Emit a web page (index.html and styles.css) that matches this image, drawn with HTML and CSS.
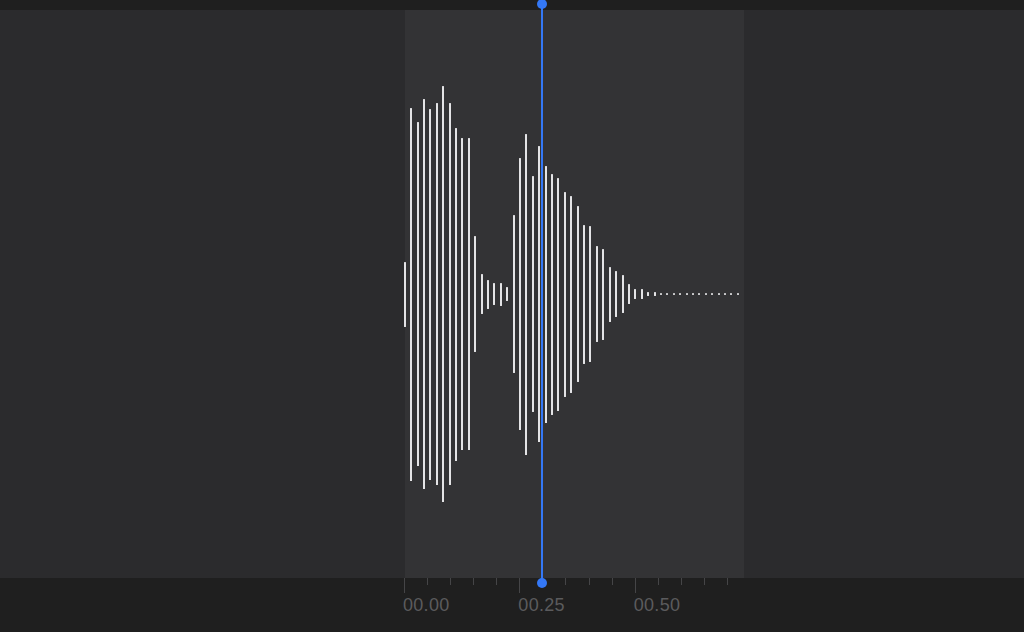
FILE: index.html
```html
<!DOCTYPE html>
<html lang="en">
<head>
<meta charset="utf-8">
<title>Waveform</title>
<link rel="stylesheet" href="styles.css">
</head>
<body>
<div class="app">
  <div class="topbar"></div>
  <div class="track">
    <div class="pad-left"></div>
    <div class="clip">
      <div class="wave">
        <div class="bar" style="height:65px"></div>
        <div class="bar" style="height:373px"></div>
        <div class="bar" style="height:344px"></div>
        <div class="bar" style="height:390px"></div>
        <div class="bar" style="height:371px"></div>
        <div class="bar" style="height:382px"></div>
        <div class="bar" style="height:416px"></div>
        <div class="bar" style="height:382px"></div>
        <div class="bar" style="height:333px"></div>
        <div class="bar" style="height:312px"></div>
        <div class="bar" style="height:312px"></div>
        <div class="bar" style="height:116px"></div>
        <div class="bar" style="height:40px"></div>
        <div class="bar" style="height:29px"></div>
        <div class="bar" style="height:22px"></div>
        <div class="bar" style="height:23px"></div>
        <div class="bar" style="height:14px"></div>
        <div class="bar" style="height:158px"></div>
        <div class="bar" style="height:272px"></div>
        <div class="bar" style="height:321px"></div>
        <div class="bar" style="height:236px"></div>
        <div class="bar" style="height:296px"></div>
        <div class="bar" style="height:257px"></div>
        <div class="bar" style="height:241px"></div>
        <div class="bar" style="height:233px"></div>
        <div class="bar" style="height:205px"></div>
        <div class="bar" style="height:197px"></div>
        <div class="bar" style="height:176px"></div>
        <div class="bar" style="height:139px"></div>
        <div class="bar" style="height:136px"></div>
        <div class="bar" style="height:96px"></div>
        <div class="bar" style="height:91px"></div>
        <div class="bar" style="height:55px"></div>
        <div class="bar" style="height:46px"></div>
        <div class="bar" style="height:38px"></div>
        <div class="bar" style="height:20px"></div>
        <div class="bar" style="height:10px"></div>
        <div class="bar" style="height:10px"></div>
        <div class="bar" style="height:4px"></div>
        <div class="bar" style="height:4px"></div>
        <div class="bar dot"></div>
        <div class="bar dot"></div>
        <div class="bar dot"></div>
        <div class="bar dot"></div>
        <div class="bar dot"></div>
        <div class="bar dot"></div>
        <div class="bar dot"></div>
        <div class="bar dot"></div>
        <div class="bar dot"></div>
        <div class="bar dot"></div>
        <div class="bar dot"></div>
        <div class="bar dot"></div>
        <div class="bar dot"></div>
      </div>
    </div>
    <div class="pad-right"></div>
  </div>
  <div class="ruler">
    <div class="ticks">
      <div class="tick major"></div>
      <div class="tick"></div>
      <div class="tick"></div>
      <div class="tick"></div>
      <div class="tick"></div>
      <div class="tick major"></div>
      <div class="tick"></div>
      <div class="tick"></div>
      <div class="tick"></div>
      <div class="tick"></div>
      <div class="tick major"></div>
      <div class="tick"></div>
      <div class="tick"></div>
      <div class="tick"></div>
      <div class="tick"></div>
    </div>
    <div class="labels">
      <span class="label">00.00</span>
      <span class="label">00.25</span>
      <span class="label">00.50</span>
    </div>
  </div>
  <div class="playhead">
    <div class="knob knob-top"></div>
    <div class="knob knob-bottom"></div>
  </div>
</div>
</body>
</html>
```

FILE: styles.css
```css
html, body {
  margin: 0;
  padding: 0;
  background: #1f1f1f;
  font-family: "Liberation Sans", Arial, sans-serif;
}

.app {
  position: relative;
  width: 1024px;
  height: 632px;
  overflow: hidden;
  display: flex;
  flex-direction: column;
}

.topbar {
  height: 10px;
  background: #1f1f1f;
  flex: none;
}

.track {
  height: 568px;
  flex: none;
  display: flex;
  background: #2b2b2d;
}

.pad-left {
  width: 405px;
  flex: none;
}

.clip {
  width: 339px;
  flex: none;
  background: #333335;
}

.pad-right {
  flex: 1;
}

.wave {
  height: 100%;
  display: flex;
  align-items: center;
  gap: 4.42px;
  margin-left: -1.3px;
}

.bar {
  width: 2px;
  flex: none;
  background: #e4e4e6;
  border-radius: 0.5px;
}

.bar.dot {
  height: 2px;
  background: #cfcfd1;
}

.ruler {
  flex: 1;
  background: #1f1f1f;
  padding-left: 404px;
}

.ticks {
  display: flex;
  align-items: flex-start;
  height: 15px;
}

.tick {
  width: 23.07px;
  flex: none;
  height: 7px;
  box-sizing: border-box;
  border-left: 1px solid #454547;
}

.tick.major {
  height: 15px;
}

.labels {
  display: flex;
  margin-top: 3px;
  margin-left: -1px;
}

.label {
  width: 115.36px;
  flex: none;
  font-size: 18px;
  line-height: 18px;
  color: #5b5b5d;
  letter-spacing: 0.3px;
}

.playhead {
  position: absolute;
  left: 541px;
  top: 0;
  width: 2px;
  height: 583px;
  background: #3478f6;
}

.knob {
  position: absolute;
  left: -4px;
  width: 10px;
  height: 10px;
  border-radius: 50%;
  background: #3478f6;
}

.knob-top {
  top: -1px;
}

.knob-bottom {
  bottom: -5px;
}
```
